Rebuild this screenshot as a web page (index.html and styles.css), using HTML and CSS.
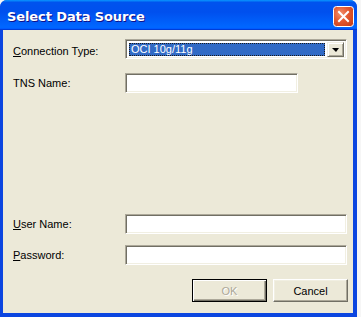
FILE: index.html
```html
<!DOCTYPE html>
<html>
<head>
<meta charset="utf-8">
<link rel="stylesheet" href="styles.css">
</head>
<body>
<div class="window">
  <div class="titlebar">
    <span class="title">Select Data Source</span>
    <span class="close">
      <svg width="21" height="21" viewBox="0 0 21 21">
        <defs>
          <radialGradient id="cg" cx="0.35" cy="0.35" r="0.8">
            <stop offset="0" stop-color="#F2906E"/>
            <stop offset="0.5" stop-color="#E3572F"/>
            <stop offset="1" stop-color="#C8401A"/>
          </radialGradient>
        </defs>
        <rect x="0.5" y="0.5" width="20" height="20" rx="3" ry="3" fill="url(#cg)" stroke="#fff" stroke-width="1"/>
        <path d="M6 6 L15 15 M15 6 L6 15" stroke="#fff" stroke-width="2" stroke-linecap="square"/>
      </svg>
    </span>
  </div>
  <div class="content">
    <div class="row">
      <span class="label label-conn"><u>C</u>onnection Type:</span>
      <div class="combo">
        <div class="combo-value"><span class="sel">OCI 10g/11g</span></div>
        <div class="combo-btn"><span class="arrow"></span></div>
      </div>
    </div>
    <div class="row row-tns">
      <span class="label">TNS Name:</span>
      <div class="field field-short"></div>
    </div>
    <div class="spacer"></div>
    <div class="row">
      <span class="label"><u>U</u>ser Name:</span>
      <div class="field"></div>
    </div>
    <div class="row row-pass">
      <span class="label"><u>P</u>assword:</span>
      <div class="field"></div>
    </div>
    <div class="buttons">
      <span class="btn btn-default btn-disabled"><span class="btn-text">OK</span></span>
      <span class="btn"><span class="btn-text">Cancel</span></span>
    </div>
  </div>
</div>
</body>
</html>
```
FILE: styles.css
```css
html, body {
  margin: 0;
  padding: 0;
}
body {
  width: 361px;
  height: 317px;
  overflow: hidden;
  background: #f6f6f6;
  font-family: "Liberation Sans", Arial, sans-serif;
  font-size: 11px;
  color: #000;
}
.window {
  width: 357px;
  height: 317px;
  box-sizing: border-box;
  display: flex;
  flex-direction: column;
  background: #0B45E0;
  border-radius: 7px 7px 0 0;
  overflow: hidden;
}
.titlebar {
  height: 30px;
  flex: none;
  display: flex;
  align-items: center;
  justify-content: space-between;
  padding: 0 3px 0 7px;
  background: linear-gradient(180deg, #0997ff 0, #0053ee 8%, #0050ee 40%, #0066ff 88%, #0066ff 93%, #005bff 95%, #003dd7 96%, #003dd7 100%);
}
.title {
  font-family: "DejaVu Sans", sans-serif;
  font-weight: bold;
  font-size: 13px;
  color: #fff;
  text-shadow: 1px 1px #0F1089;
  letter-spacing: -0.1px;
  padding-top: 2px;
}
.close {
  display: flex;
  width: 21px;
  height: 21px;
  margin-top: 3px;
}
.content {
  flex: 1;
  margin: 0 4px 4px 3px;
  background: #ECE9D8;
  display: flex;
  flex-direction: column;
  padding: 9px 5px 11px 10px;
}
.row {
  display: flex;
  align-items: center;
  height: 20px;
}
.row-tns {
  margin-top: 14px;
}
.row-pass {
  margin-top: 11px;
}
.spacer {
  flex: 1;
}
.label {
  width: 112px;
  flex: none;
  white-space: nowrap;
}
.label-conn {
  padding-top: 3px;
}
.label u {
  text-decoration: underline;
  text-underline-offset: 1px;
}
.field {
  width: 222px;
  height: 20px;
  box-sizing: border-box;
  background: #fff;
  border: 1px solid;
  border-color: #ACA899 #fff #fff #ACA899;
  box-shadow: inset 1px 1px #716F64, inset -1px -1px #F1EFE2;
}
.field-short {
  width: 173px;
}
.combo {
  width: 222px;
  height: 20px;
  box-sizing: border-box;
  background: #fff;
  border: 1px solid;
  border-color: #ACA899 #fff #fff #ACA899;
  box-shadow: inset 1px 1px #716F64, inset -1px -1px #F1EFE2;
  padding: 2px 2px 1px 2px;
  display: flex;
  gap: 1px;
}
.combo-value {
  flex: 1;
  padding: 1px 1px 1px 1px;
  display: flex;
}
.sel {
  flex: 1;
  box-sizing: border-box;
  background: #316AC5;
  color: #fff;
  border: 1px dotted #1a1a1a;
  padding-left: 1px;
  line-height: 11px;
}
.combo-btn {
  width: 17px;
  flex: none;
  box-sizing: border-box;
  background: #ECE9D8;
  border: 1px solid;
  border-color: #F1EFE2 #716F64 #716F64 #F1EFE2;
  box-shadow: inset 1px 1px #fff, inset -1px -1px #ACA899;
  display: flex;
  align-items: center;
  justify-content: center;
}
.arrow {
  width: 0;
  height: 0;
  border-left: 4px solid transparent;
  border-right: 3px solid transparent;
  border-top: 4px solid #000;
  margin-top: 1px;
}
.buttons {
  display: flex;
  justify-content: flex-end;
  gap: 6px;
  margin-top: 14px;
}
.btn {
  width: 75px;
  height: 23px;
  box-sizing: border-box;
  display: flex;
  align-items: center;
  justify-content: center;
  background: #ECE9D8;
  border: 1px solid;
  border-color: #fff #716F64 #716F64 #fff;
  box-shadow: inset -1px -1px #ACA899, inset 1px 1px #F1EFE2;
}
.btn-default {
  border-color: #000;
  box-shadow: inset 1px 1px #fff, inset -1px -1px #716F64, inset -2px -2px #ACA899;
}
.btn-disabled .btn-text {
  color: #ACA899;
  text-shadow: 1px 1px #fff;
}
```
